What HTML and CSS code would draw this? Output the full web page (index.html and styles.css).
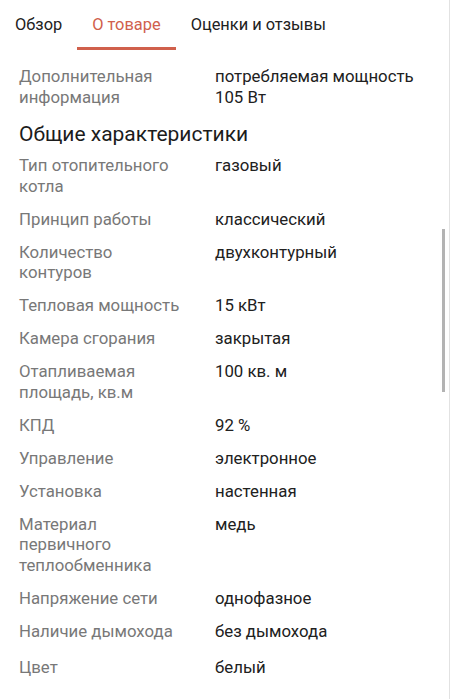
FILE: index.html
```html
<!DOCTYPE html>
<html lang="ru">
<head>
<meta charset="utf-8">
<link rel="stylesheet" href="styles.css">
</head>
<body>
<div class="page">
  <nav class="tabs">
    <div class="tab">Обзор</div>
    <div class="tab active">О товаре</div>
    <div class="tab">Оценки и отзывы</div>
  </nav>
  <div class="content">
    <dl class="specs">
      <dt>Дополнительная информация</dt><dd>потребляемая мощность 105 Вт</dd>
    </dl>
    <h2 class="section-title">Общие характеристики</h2>
    <dl class="specs">
      <dt>Тип отопительного котла</dt><dd>газовый</dd>
      <dt>Принцип работы</dt><dd>классический</dd>
      <dt>Количество контуров</dt><dd>двухконтурный</dd>
      <dt>Тепловая мощность</dt><dd>15 кВт</dd>
      <dt>Камера сгорания</dt><dd>закрытая</dd>
      <dt>Отапливаемая площадь, кв.м</dt><dd>100 кв. м</dd>
      <dt>КПД</dt><dd>92 %</dd>
      <dt>Управление</dt><dd>электронное</dd>
      <dt>Установка</dt><dd>настенная</dd>
      <dt>Материал первичного теплообменника</dt><dd>медь</dd>
      <dt>Напряжение сети</dt><dd>однофазное</dd>
      <dt>Наличие дымохода</dt><dd>без дымохода</dd>
      <dt class="last">Цвет</dt><dd class="last">белый</dd>
    </dl>
  </div>
  <div class="scrollbar"></div>
</div>
</body>
</html>
```

FILE: styles.css
```css
html, body {
  margin: 0;
  padding: 0;
  background: #fff;
  overflow: hidden;
}
body {
  font-family: Roboto, "Noto Sans", sans-serif;
  font-size: 16.8px;
  color: #212121;
}
.page {
  position: relative;
  width: 450px;
  height: 699px;
  box-sizing: border-box;
  border-right: 1px solid #e2e2e2;
  overflow: hidden;
}
.tabs {
  display: flex;
  height: 50px;
  align-items: stretch;
  font-size: 16.4px;
}
.tab {
  padding: 1px 15px 0;
  display: flex;
  align-items: center;
  box-sizing: border-box;
  color: #222;
  border-bottom: 3px solid transparent;
  line-height: 21px;
}
.tab.active {
  color: #d0604c;
  border-bottom-color: #d0604c;
}
.content {
  padding: 16px 20px 0 19px;
}
.specs {
  display: grid;
  grid-template-columns: 165px 1fr;
  column-gap: 31px;
  row-gap: 12.5px;
  margin: 0;
  line-height: 20.5px;
}
.specs dt {
  color: #787878;
  margin: 0;
}
.specs dd {
  margin: 0;
  color: #212121;
}
.specs .last {
  margin-top: 3px;
}
.section-title {
  font-size: 21px;
  font-weight: 400;
  line-height: 26px;
  margin: 14px 0 8px;
  color: #1c1c1c;
}
.scrollbar {
  position: absolute;
  right: 4px;
  top: 229px;
  width: 3px;
  height: 163px;
  background: #b3b3b3;
}
```
